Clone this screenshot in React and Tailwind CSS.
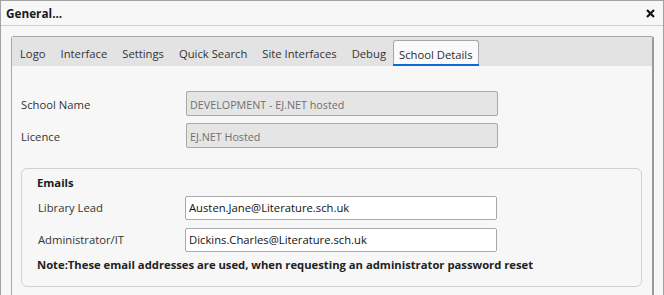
import React from "react";

const font = { fontFamily: '"Open Sans", "Noto Sans", sans-serif' };

function Tab({ children, active }) {
  if (active) {
    return (
      <div className="relative h-[26px] pt-[3px] px-[5px] flex items-center bg-[#fafafa] border border-b-0 border-[#a7a7a7] rounded-t-[3px] text-[#2a2a2a]">
        {children}
        <div className="absolute left-[-1px] right-[-1px] bottom-0 h-[2px] bg-[#0b6bd8]" />
      </div>
    );
  }
  return <div className="h-[26px] pt-[3px] flex items-center text-[#333]">{children}</div>;
}

export default function App() {
  return (
    <div style={font} className="w-[664px] h-[295px] overflow-hidden bg-[#f7f7f7] border-l border-t border-r border-[#a3a3a3] text-[11.25px] text-[#333]">
      <div className="h-[25px] border-b border-[#cfcfcf] flex items-center justify-between pl-[5px] pr-[8px]">
        <span className="font-bold text-[11.75px] text-[#1a1a1a] pt-[1px]">General...</span>
        <svg width="9" height="9" viewBox="0 0 9 9">
          <path d="M1 1L8 8M8 1L1 8" stroke="#111" strokeWidth="2.2" />
        </svg>
      </div>
      <div className="pt-[10px] pl-[10px] pr-[9px]">
        <div className="border border-b-0 border-[#a7a7a7] border-r-2 border-r-[#9a9a9a] rounded-t-[3px] h-[260px]">
          <div className="h-[29px] bg-[#e3e3e3] flex items-end pl-[8px] gap-[15px]">
            <Tab>Logo</Tab>
            <Tab>Interface</Tab>
            <Tab>Settings</Tab>
            <Tab>Quick Search</Tab>
            <Tab>Site Interfaces</Tab>
            <div className="flex items-end gap-[7px]">
              <Tab>Debug</Tab>
              <Tab active>School Details</Tab>
            </div>
          </div>
          <div className="pt-[25px] pl-[9px] pr-[10px]">
            <div className="flex flex-col gap-[7px]">
              <div className="flex items-center">
                <div className="w-[165px] pt-[4px]">School Name</div>
                <div className="w-[312px] h-[25px] bg-[#e5e5e5] border border-[#a9a9a9] rounded-[2px] flex items-center px-[3px] pt-[3px] text-[10.75px] text-[#707070]">
                  DEVELOPMENT - EJ.NET hosted
                </div>
              </div>
              <div className="flex items-center">
                <div className="w-[165px] pt-[4px]">Licence</div>
                <div className="w-[312px] h-[25px] bg-[#e5e5e5] border border-[#a9a9a9] rounded-[2px] flex items-center px-[3px] pt-[3px] text-[10.75px] text-[#707070]">
                  EJ.NET Hosted
                </div>
              </div>
            </div>
            <div className="mt-[20px] border border-[#d2d2d2] rounded-[6px] h-[119px] pl-[15px] pt-[6px]">
              <div className="font-bold text-[#1a1a1a]">Emails</div>
              <div className="mt-[4px] flex flex-col gap-[8px]">
                <div className="flex items-center">
                  <div className="w-[148px] pl-[1px] pt-[2px]">Library Lead</div>
                  <div className="w-[312px] h-[24px] bg-white border border-[#a9a9a9] rounded-[2px] flex items-center px-[3px] pt-[2px] text-[#111]">
                    Austen.Jane@Literature.sch.uk
                  </div>
                </div>
                <div className="flex items-center">
                  <div className="w-[148px] pl-[1px] pt-[2px]">Administrator/IT</div>
                  <div className="w-[312px] h-[24px] bg-white border border-[#a9a9a9] rounded-[2px] flex items-center px-[3px] pt-[2px] text-[#111]">
                    Dickins.Charles@Literature.sch.uk
                  </div>
                </div>
              </div>
              <div className="mt-[5px] font-bold text-[#222]">
                Note:These email addresses are used, when requesting an administrator password reset
              </div>
            </div>
          </div>
        </div>
      </div>
    </div>
  );
}
